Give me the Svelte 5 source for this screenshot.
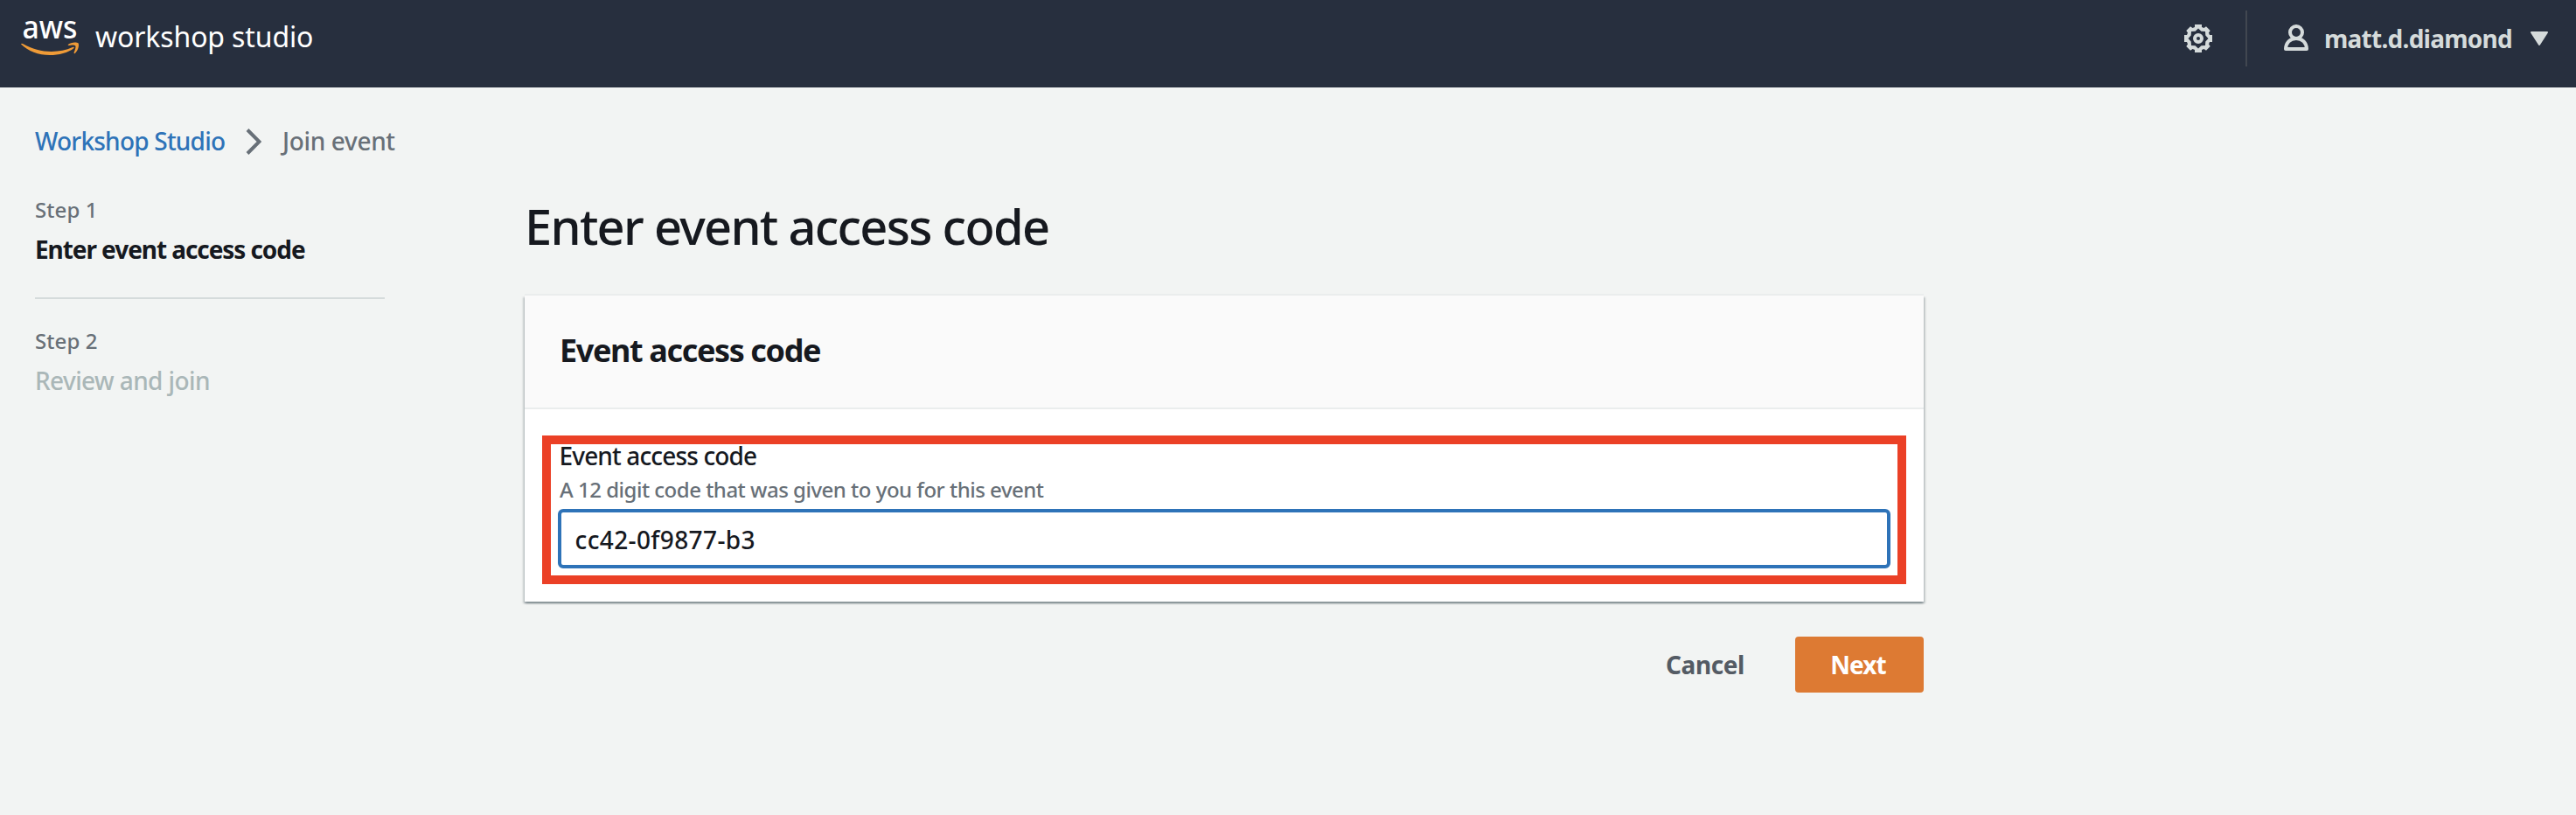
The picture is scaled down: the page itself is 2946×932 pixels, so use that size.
<script>
  let code = $state('cc42-0f9877-b3');
</script>

<header>
  <svg class="logo" viewBox="20 8 76 60" aria-label="aws">
    <text x="25.5" y="44" textLength="63" lengthAdjust="spacingAndGlyphs">aws</text>
    <path d="M24 50.500Q24.500 49 26.500 50.200C44 60.500 66 61.500 83 54Q85.300 53.300 84.600 55C78 60.500 67 63 57 63C44 63 32 58.500 24 50.500Z" />
    <path d="M77.500 51.300C81 48 87.500 48 89.500 49.300C91 52 89 58.500 85.500 61.200Q84 61.500 84.700 59.800C86 56.500 87 53.500 86.300 52.500C85 51.300 81.500 51.500 78.500 52.100Z" />
  </svg>
  <span class="product">workshop studio</span>
  <svg class="gear" viewBox="0 0 32 32" aria-hidden="true">
    <path fill-rule="evenodd" d="M12 0H20V3L22.500 4 25 2.300 29.700 7 28 9.500 29 12H32V20H29L28 22.500 29.700 25 25 29.700 22.500 28 20 29V32H12V29L9.500 28 7 29.700 2.300 25 4 22.500 3 20H0V12H3L4 9.500 2.300 7 7 2.300 9.500 4 12 3ZM16 4.500L12.600 7.700 8 8 7.700 12.600 4.500 16 7.700 19.400 8 24 12.600 24.300 16 27.500 19.400 24.300 24 24 24.300 19.400 27.500 16 24.300 12.600 24 8 19.400 7.700Z" />
    <circle cx="16" cy="16" r="4" />
  </svg>
  <div class="rule"></div>
  <svg class="person" viewBox="0 0 28 30" aria-hidden="true">
    <circle cx="14" cy="9" r="7" />
    <path d="M2 28C2 21 7 16 14 16S26 21 26 28Z" />
  </svg>
  <span class="user">matt.d.diamond</span>
  <svg class="caret" viewBox="0 0 20 16" aria-hidden="true"><path d="M1 1H19L10 15Z" /></svg>
</header>

<main>
  <nav class="crumbs">
    <a href="#home">Workshop Studio</a>
    <svg viewBox="0 0 18 30" aria-hidden="true"><path d="M2 1.500L15.500 15 2 28.500" /></svg>
    <span>Join event</span>
  </nav>
  <div class="columns">
    <aside>
      <div class="step">Step 1</div>
      <div class="name active">Enter event access code</div>
      <hr />
      <div class="step">Step 2</div>
      <div class="name pending">Review and join</div>
    </aside>
    <section>
      <h1>Enter event access code</h1>
      <div class="card">
        <h2>Event access code</h2>
        <div class="field">
          <label for="code">Event access code</label>
          <p>A 12 digit code that was given to you for this event</p>
          <input id="code" bind:value={code} />
        </div>
      </div>
      <div class="actions">
        <button class="cancel">Cancel</button>
        <button class="next">Next</button>
      </div>
    </section>
  </div>
</main>

<style>
  :global(body) { background: #f2f4f3; }
  header, main { font-family: "Noto Sans", "Open Sans", sans-serif; box-sizing: border-box; white-space: nowrap; }
  header { display: flex; align-items: center; height: 100px; padding: 0 32px 12px 20px; background: #272f3e; color: #d5dbdb; }
  .logo { width: 76px; height: 60px; margin-top: -12px; overflow: visible; }
  .logo text { font-size: 37px; font-weight: 500; fill: #fff; }
  .logo path { fill: #ef9b37; }
  .product { margin: -5px auto 0 13px; font-size: 32px; letter-spacing: -0.13px; color: #fff; }
  .gear { width: 32px; height: 32px; fill: #d5dbdb; }
  .gear circle { fill: none; stroke: #d5dbdb; stroke-width: 4; }
  .rule { width: 2px; height: 64px; margin: 0 42px 0 38px; background: #414750; }
  .person { width: 28px; height: 30px; margin-top: -2px; fill: none; stroke: #d5dbdb; stroke-width: 4; stroke-linejoin: round; }
  .user { width: 236px; margin: -1px 0 0 18px; font-size: 28px; font-weight: 700; letter-spacing: -0.74px; }
  .caret { width: 20px; height: 16px; fill: #d5dbdb; stroke: #d5dbdb; stroke-width: 2; stroke-linejoin: round; }
  main { padding: 41px 40px 0; font-size: 28px; font-weight: 500; color: #16191f; }
  .crumbs { display: flex; align-items: center; height: 40px; color: #687078; letter-spacing: -0.35px; }
  .crumbs a { width: 241px; color: #2e73b8; text-decoration: none; letter-spacing: -0.78px; }
  .crumbs svg { width: 18px; height: 30px; margin: 2px 24px 0 0; fill: none; stroke: #687078; stroke-width: 4; }
  .columns { display: flex; gap: 160px; padding-top: 43px; }
  aside { width: 400px; }
  .step { height: 32px; font-size: 24px; line-height: 32px; letter-spacing: 0.1px; color: #687078; }
  .name { height: 40px; margin-top: 9px; line-height: 41px; }
  .active { font-weight: 700; letter-spacing: -1.07px; }
  .pending { letter-spacing: -0.6px; color: #aab7b8; }
  hr { height: 2px; margin: 35px 0 32px; border: 0; background: #d5dbdb; }
  section { width: 1600px; }
  h1 { height: 68px; margin: 0 0 46px; font-size: 56px; line-height: 69px; font-weight: 500; letter-spacing: -1.71px; }
  .card { display: flex; flex-direction: column; height: 350px; background: #fff; box-shadow: 0 2px 2px rgba(0,28,36,.3), 2px 2px 2px rgba(0,28,36,.15), -2px 2px 2px rgba(0,28,36,.15), 0 -2px 0 #eaeded; }
  h2 { height: 122px; margin: 0; padding: 2px 0 4px 40px; border-bottom: 2px solid #eaeded; background: #fafafa; font-size: 36px; line-height: 122px; font-weight: 700; letter-spacing: -1.38px; }
  .field { display: flex; flex-direction: column; box-sizing: border-box; height: 170px; margin: 30px 20px 20px; padding: 0 8px; border: 10px solid #eb4026; }
  label { height: 26px; padding-left: 1.5px; line-height: 27px; letter-spacing: -0.86px; }
  p { height: 32px; margin: 10px 0 6px; padding-left: 2px; font-size: 24px; line-height: 32px; letter-spacing: -0.5px; color: #687078; }
  input { box-sizing: border-box; width: 100%; height: 68px; padding: 1px 15px 0 15.5px; border: 4px solid #2e73b8; border-radius: 6px; outline: 0; background: #fff; color: #16191f; font: 500 28px "Noto Sans", sans-serif; letter-spacing: 0.39px; }
  .actions { display: flex; justify-content: flex-end; gap: 58px; margin-top: 40px; }
  button { height: 64px; padding: 0 0 1px; border: 0; font: 700 28px "Noto Sans", sans-serif; }
  .cancel { background: none; color: #545b64; letter-spacing: -0.4px; }
  .next { width: 147px; padding-right: 3px; border-radius: 4px; background: #dd7a33; color: #fff; letter-spacing: -0.9px; }
</style>
